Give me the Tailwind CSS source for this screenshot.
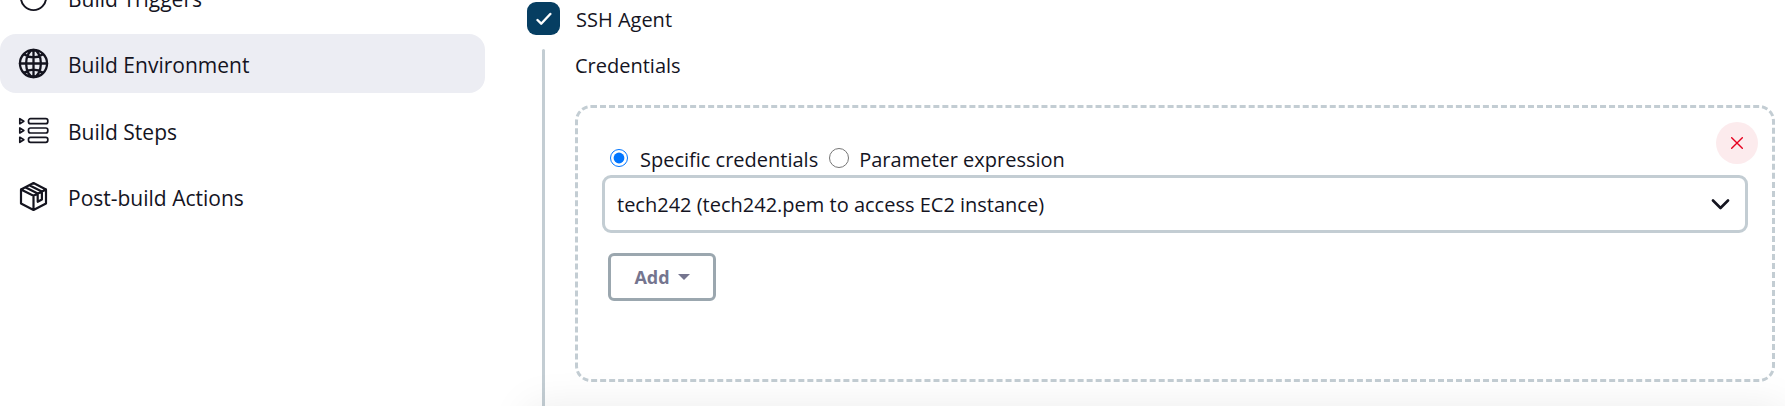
<!DOCTYPE html>
<html lang="en">
<head>
<meta charset="utf-8">
<title>Build Environment</title>
<script src="https://cdn.jsdelivr.net/npm/@tailwindcss/browser@4"></script>
</head>
<body class="h-screen overflow-hidden bg-white font-['Segoe_UI','Open_Sans',sans-serif] text-[20px] leading-7 text-[#14141f]">
<div class="flex h-full overflow-hidden">
  <nav class="-mt-8 flex w-[485px] shrink-0 flex-col gap-2 text-[21px] font-medium" aria-label="Configuration">
    <a href="#triggers" class="flex h-[58px] shrink-0 items-center gap-[19px] rounded-2xl px-[18px]">
      <svg class="size-[31px] shrink-0" viewBox="0 0 512 512" fill="none" stroke="currentColor" stroke-width="32"><circle cx="256" cy="256" r="208"/><path d="M256 128v144h96"/></svg>
      <span class="pt-[3px]">Build Triggers</span>
    </a>
    <a href="#environment" class="flex h-[59px] shrink-0 items-center gap-[19px] rounded-2xl bg-[#ecedf3] px-[18px]" aria-current="true">
      <svg class="size-[31px] shrink-0" viewBox="0 0 512 512" fill="none" stroke="currentColor" stroke-width="38" stroke-linecap="round"><circle cx="256" cy="256" r="224"/><path d="M256 32c-63 0-122 100-122 224s59 224 122 224 122-100 122-224S319 32 256 32ZM107 107c41 29 93 47 149 47s108-18 149-47M405 405c-41-29-93-47-149-47s-108 18-149 47M256 32v448M480 256H32"/></svg>
      <span class="pt-[3px]">Build Environment</span>
    </a>
    <a href="#steps" class="flex h-[58px] shrink-0 items-center gap-[19px] rounded-2xl px-[18px]">
      <svg class="size-[31px] shrink-0" viewBox="0 0 31 31" fill="none" stroke="currentColor" stroke-width="1.700" stroke-linejoin="round"><path d="M1.800 3.700v5l4-2.500zM1.800 13v5l4-2.500zM1.800 22.300v5l4-2.500z"/><rect x="10.500" y="3.700" width="19.300" height="5" rx="2"/><rect x="10.500" y="13" width="19.300" height="5" rx="2"/><rect x="10.500" y="22.300" width="19.300" height="5" rx="2"/></svg>
      <span class="pt-[3px]">Build Steps</span>
    </a>
    <a href="#post" class="flex h-[59px] shrink-0 items-center gap-[19px] rounded-2xl px-[18px]">
      <svg class="size-[31px] shrink-0" viewBox="0 0 31 31" fill="none" stroke="currentColor" stroke-width="2.200" stroke-linejoin="round" stroke-linecap="round"><path d="M15.500 2 28 8.500v14L15.500 29 3 22.500v-14zM3 8.500l12.500 6.300L28 8.500M15.500 14.800V29M7.200 6.300l12.500 6.300M11.300 4.200l12.500 6.300M19.700 12.800v8l4.200-2.300v-8"/></svg>
      <span class="pt-[3px]">Post-build Actions</span>
    </a>
  </nav>

  <main class="min-w-0 flex-1 pt-[2px] pr-[10px] pl-[42px]">
    <label class="flex w-fit items-center gap-4 font-medium">
      <span class="grid size-[33px] place-items-center">
        <input type="checkbox" checked class="col-start-1 row-start-1 size-[33px] appearance-none rounded-[9px] bg-[#063e62]">
        <svg class="pointer-events-none col-start-1 row-start-1 size-4" viewBox="0 0 16 16" fill="none" stroke="white" stroke-width="2.400" stroke-linecap="round" stroke-linejoin="round"><path d="M1.500 9 5.200 12.700 14.300 3"/></svg>
      </span>
      <span class="pt-[2px]">SSH Agent</span>
    </label>

    <div class="mt-[14px] ml-[15px] flex">
      <div class="w-[3px] shrink-0 rounded-full bg-[#c3cdd3]"></div>
      <section class="ml-[30px] min-w-0 flex-1 pb-16">
        <h2 class="mt-[3px] font-medium">Credentials</h2>
        <div class="mt-[25px] flex h-[277px] flex-col rounded-2xl border-3 border-dashed border-[#c3cdd3] px-6 pt-[14px]">
          <button type="button" aria-label="Remove" class="-mr-[10px] grid size-[42px] shrink-0 place-items-center self-end rounded-full bg-[#fcebed] text-[#e6001f]">
            <svg class="size-3" viewBox="0 0 12 12" fill="none" stroke="currentColor" stroke-width="1.400" stroke-linecap="round"><path d="M.7.7l10.600 10.600M11.300.7.7 11.300"/></svg>
          </button>
          <div class="-mt-[18px] flex items-center gap-[11px] pl-2">
            <label class="flex items-center gap-3"><input type="radio" name="kind" checked class="-mt-1 size-[18px] accent-[#0075ff]">Specific credentials</label>
            <label class="flex items-center gap-[10px]"><input type="radio" name="kind" class="-mt-[5px] size-[20px] accent-[#0075ff]">Parameter expression</label>
          </div>
          <div class="mt-px grid items-center">
            <select aria-label="Credentials" class="col-start-1 row-start-1 h-[58px] w-full appearance-none rounded-[9px] border-3 border-[#c3cdd3] bg-white pt-[2px] pr-12 pl-3">
              <option>tech242 (tech242.pem to access EC2 instance)</option>
            </select>
            <svg class="pointer-events-none col-start-1 row-start-1 mr-[18px] h-[11px] w-[19px] justify-self-end" viewBox="0 0 19 11" fill="none" stroke="currentColor" stroke-width="2.600" stroke-linecap="round" stroke-linejoin="round"><path d="M2 1.500 9.500 9 17 1.500"/></svg>
          </div>
          <button type="button" class="mt-5 ml-[6px] flex h-[48px] w-[108px] shrink-0 items-center justify-center gap-2 rounded-md border-3 border-[#9ba7af] text-[18px] font-bold text-[#75758f]">Add
            <svg class="h-[6px] w-3" viewBox="0 0 12 6" fill="currentColor"><path d="M0 0h12L6 6z"/></svg>
          </button>
        </div>
      </section>
    </div>
  </main>
</div>
<div class="pointer-events-none fixed top-full right-0 left-[527px] h-16 shadow-[0_0_40px_rgba(0,0,0,0.08)]"></div>
</body>
</html>
